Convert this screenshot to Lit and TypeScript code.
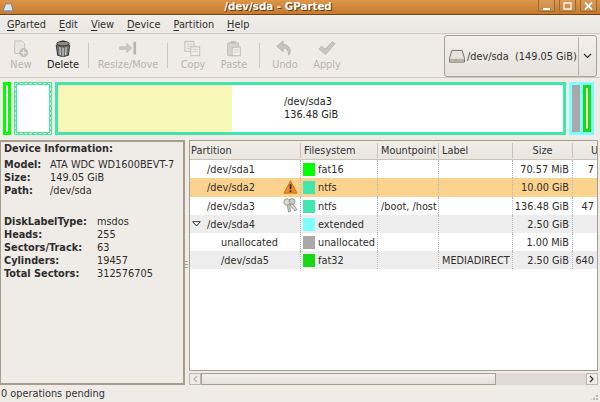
import { LitElement, html, css, svg } from "lit";
import { customElement } from "lit/decorators.js";

const icons: Record<string, any> = {
  new: svg`<path d="M4 1h8l3 3v11H4z" fill="#e8e6e2" stroke="#c4c0ba"/><circle cx="14" cy="14" r="5" fill="#c2bfba"/><path d="M14 11v6M11 14h6" stroke="#eeeae6" stroke-width="1.400"/>`,
  delete: svg`<ellipse cx="11" cy="4" rx="7" ry="2.600" fill="#8d8d88" stroke="#3a3a38"/><path d="M8 2.300q3-2 6 0" fill="none" stroke="#333" stroke-width="1.200"/><path d="M3.500 5.500l1.500 11.500q6 3 12 0l1.500-11.500q-7.500 3-15 0z" fill="#6f706c" stroke="#2f2f2d"/><path d="M7.500 8l.5 9M11 8.700v9.500M14.500 8l-.5 9" stroke="#c9c9c5" stroke-width="1.400"/>`,
  resize: svg`<path d="M1 7h8V3l7 6-7 6v-4H1z" fill="#c9c6c1"/><rect x="17" y="2" width="3" height="14" fill="#b8b5b0"/>`,
  copy: svg`<rect x="2" y="1.500" width="10" height="11" fill="#eeece8" stroke="#bdbab5"/><path d="M4 4.500h6M4 7h6M4 9.500h6" stroke="#cfccc7"/><rect x="8.500" y="7.500" width="10" height="10" fill="#f0eeea" stroke="#bdbab5"/><path d="M10.500 10.500h6M10.500 13h6" stroke="#cfccc7"/>`,
  paste: svg`<rect x="4" y="3" width="12" height="14.500" rx="1" fill="#d6d3ce" stroke="#bdbab5"/><rect x="7.500" y="1" width="5" height="3.500" fill="#c4c1bc"/><rect x="9" y="8" width="9" height="9.500" fill="#f0eeea" stroke="#bdbab5"/><path d="M10.500 11h6M10.500 13.500h6" stroke="#cfccc7"/>`,
  undo: svg`<path d="M9 1L2 7l7 6V9.500c4 0 6 2 6 7.500 3-3.500 3.500-11-6-12z" fill="#c6c3be" stroke="#b8b5b0"/>`,
  apply: svg`<path d="M2 10l3-3 4 3 8-8 3 2-10.500 12z" fill="#c9c6c1" stroke="#bcb9b4"/>`,
};

const tools: any[] = [
  { k: "new", t: "New", w: 42, on: false },
  { k: "delete", t: "Delete", w: 42, on: true },
  { sep: 4 },
  { k: "resize", t: "Resize/Move", w: 78, on: false },
  { sep: 0 },
  { k: "copy", t: "Copy", w: 50, on: false },
  { k: "paste", t: "Paste", w: 32, on: false },
  { sep: 9 },
  { k: "undo", t: "Undo", w: 50, on: false },
  { k: "apply", t: "Apply", w: 34, on: false },
];

const warn = html`<svg class="ic w" width="15" height="14" viewBox="0 0 17 16"><path d="M8.500 1L16 15H1z" fill="#f08a1e" stroke="#c76a10" stroke-linejoin="round"/><path d="M8.500 5v5.500" stroke="#2b2210" stroke-width="2"/><circle cx="8.500" cy="12.800" r="1.100" fill="#2b2210"/></svg>`;
const keys = html`<svg class="ic k" width="17" height="15" viewBox="0 0 17 15"><path d="M6 6l6 7 2-1.500-5-6.500z" fill="#d4d4d0" stroke="#8b8b86" stroke-width=".8"/><path d="M4 6l1.500 8 2-.5-.8-7.500z" fill="#c8c8c4" stroke="#8b8b86" stroke-width=".8"/><circle cx="4" cy="4" r="3.200" fill="#dcdcd8" stroke="#8b8b86" stroke-width=".8"/><circle cx="9" cy="3.500" r="3" fill="#c8c8c4" stroke="#8b8b86" stroke-width=".8"/></svg>`;
const expander = html`<svg class="ex" width="9" height="6" viewBox="0 0 9 6"><path d="M.7.700h7.600L4.500 5z" fill="#fff" stroke="#333" stroke-width="1"/></svg>`;

const rows = [
  { p: "/dev/sda1", ind: 0, icon: null, c: "#00ff00", fs: "fat16", m: "", l: "", s: "70.57 MiB", u: "7", cls: "" },
  { p: "/dev/sda2", ind: 0, icon: warn, c: "#42e5ac", fs: "ntfs", m: "", l: "", s: "10.00 GiB", u: "", cls: "sel" },
  { p: "/dev/sda3", ind: 0, icon: keys, c: "#42e5ac", fs: "ntfs", m: "/boot, /host", l: "", s: "136.48 GiB", u: "47", cls: "" },
  { p: "/dev/sda4", ind: 0, icon: null, c: "#7dffff", fs: "extended", m: "", l: "", s: "2.50 GiB", u: "", cls: "alt", exp: true },
  { p: "unallocated", ind: 1, icon: null, c: "#a9a9a9", fs: "unallocated", m: "", l: "", s: "1.00 MiB", u: "", cls: "" },
  { p: "/dev/sda5", ind: 1, icon: null, c: "#18d818", fs: "fat32", m: "", l: "MEDIADIRECT", s: "2.50 GiB", u: "640", cls: "alt" },
];

const info = [["Model:", "ATA WDC WD1600BEVT-7"], ["Size:", "149.05 GiB"], ["Path:", "/dev/sda"]];
const info2 = [["DiskLabelType:", "msdos"], ["Heads:", "255"], ["Sectors/Track:", "63"], ["Cylinders:", "19457"], ["Total Sectors:", "312576705"]];

@customElement("app-root")
export class AppRoot extends LitElement {
  static styles = css`
    :host { display: flex; flex-direction: column; width: 600px; height: 402px; overflow: hidden; background: #efebe7; font: 9.75px/13px "DejaVu Sans", sans-serif; color: #2e2e2c; }
    .title { height: 15px; box-sizing: border-box; flex: none; display: flex; align-items: center; background: linear-gradient(#dd964a, #c67a2c); border-bottom: 1px solid #6e4416; position: relative; padding-left: 2px; }
    .title .name { position: absolute; left: 0; right: 44px; text-align: center; top: -1px; color: #fff; font-weight: bold; font-size: 10.3px; line-height: 14px; text-shadow: 1px 1px 0 #5c3a12; }
    .wb { display: flex; gap: 4px; margin-left: auto; margin-right: 3px; z-index: 1; align-self: flex-start; }
    .wb span { width: 17px; height: 12px; box-sizing: border-box; border: 1px solid #9a6a36; border-top: 0; border-radius: 0 0 2px 2px; background: linear-gradient(#d99a58, #c98a48); display: flex; align-items: center; justify-content: center; }
    .menu { height: 19px; box-sizing: border-box; flex: none; display: flex; align-items: center; padding-left: 7px; border-bottom: 1px solid #cfc9bf; background: linear-gradient(#f0ede9, #ebe7e2); }
    .menu span { margin-right: 13px; }
    .menu u { text-decoration-thickness: 1px; text-underline-offset: 2px; }
    .tb { height: 44px; flex: none; box-sizing: border-box; display: flex; align-items: flex-start; padding: 6px 0 0 0; border-bottom: 1px solid #cfc9bf; }
    .tool { display: flex; flex-direction: column; align-items: center; flex: none; color: #b8b5ae; }
    .tool.on { color: #1e1e1c; }
    .tool svg { height: 18px; }
    .tool .lb { line-height: 14px; }
    .sep { width: 1px; height: 25px; margin-top: 3px; flex: none; background: #cdc8bf; }
    .tools { display: flex; }
    .combo { margin-left: auto; margin-right: 3px; margin-top: -5px; width: 153px; height: 42px; box-sizing: border-box; border: 1px solid #a8a294; border-radius: 3px; background: linear-gradient(#f2efeb, #e6e2dc); display: flex; align-items: center; padding-left: 3px; color: #333; }
    .combo .v { white-space: pre; margin-left: 1px; flex: 1; }
    .combo .ar { width: 17px; align-self: stretch; margin: 1px 0; border-left: 1px solid #b8b2a6; display: flex; align-items: center; justify-content: center; }
    .graph { height: 62px; flex: none; box-sizing: border-box; display: flex; gap: 3px; padding: 4px 0 0 3px; }
    .part { box-sizing: border-box; height: 53px; border: 3px solid; flex: none; background: #fff; display: flex; }
    .p1 { width: 8px; border-color: #00ff00; }
    .p2 { width: 38px; border-color: #42e5ac; outline: 1px dashed #f7f7b8; outline-offset: -2px; }
    .p3 { width: 511px; border-color: #42e5ac; }
    .p3 .used { width: 174px; background: #f7f7b8; }
    .p3 .txt { margin-left: 52px; margin-top: 10px; color: #222; }
    .ext { width: 25px; height: 53px; flex: none; box-sizing: border-box; background: #7dffff; padding: 3px; display: flex; gap: 3px; }
    .ext i { display: block; box-sizing: border-box; width: 8px; height: 47px; }
    .ext .un { background: #a9a9a9; }
    .ext .f32 { border: 3px solid #18d818; background: #f7f7b8; }
    .main { flex: 1; min-height: 0; display: flex; }
    .frame { width: 185px; flex: none; box-sizing: border-box; border: 2px solid #a89c8c; border-left-width: 1px; padding: 0 3px; }
    .frame .b { font-weight: bold; }
    .frame .h { font-weight: bold; margin-bottom: 3px; }
    .kv { display: grid; white-space: nowrap; }
    .k1 { grid-template-columns: 46px auto; margin-bottom: 18px; }
    .k2 { grid-template-columns: 93px auto; }
    .pane { width: 4px; flex: none; display: flex; align-items: center; }
    .pane::before { content: ""; display: block; width: 3px; height: 7px; margin-top: 4px; background: repeating-linear-gradient(#a9a397 0 1px, transparent 1px 3px); }
    .right { flex: 1; min-width: 0; display: flex; flex-direction: column; }
    .tree { flex: 1; min-height: 0; margin-right: 2px; box-sizing: border-box; border: 1px solid #a89c8c; background: #fff; overflow: hidden; }
    .row { display: grid; grid-template-columns: 111px 77px 61px 74px 60px 24px; height: 18px; box-sizing: border-box; align-items: center; }
    .head { height: 19px; background: linear-gradient(#f1eeea, #e9e5df); border-bottom: 1px solid #c9c3b8; color: #333; }
    .head > div { border-right: 1px solid #c9c3b8; padding-left: 3px; height: 15px; line-height: 15px; overflow: hidden; white-space: nowrap; }
    .head > div:first-child { padding-left: 1px; }
    .head > .sz { text-align: center; padding-left: 0; }
    .head > .un { border: 0; padding-left: 18px; }
    .row.alt { background: #ededed; }
    .row.sel { background: #fbd28e; height: 19px; }
    .cell { height: 100%; box-sizing: border-box; border-right: 1px dotted #b9b9b9; display: flex; align-items: center; white-space: nowrap; overflow: hidden; padding-left: 3px; }
    .cell.r { justify-content: flex-end; padding-right: 3px; }
    .c0 { position: relative; padding-left: 17px; border-right: 0; }
    .c0.ind { padding-left: 31px; }
    .c0 .ic { position: absolute; right: 3px; }
    .c0 .w { top: 2px; }
    .c0 .k { top: 1px; right: 1px; }
    .c0 .ex { position: absolute; left: 2px; top: 6px; }
    .fs { padding-left: 2px; border-left: 1px dotted #b9b9b9; margin-left: -1px; }
    .sw { width: 12px; height: 13px; flex: none; margin-right: 3px; }
    .cell.last { border-right: 0; justify-content: flex-end; padding: 0 3px 0 0; }
    .sb { height: 12px; flex: none; margin: 2px 2px 0 0; display: flex; background: #dfdad3; }
    .btn { width: 12px; flex: none; box-sizing: border-box; border: 1px solid #bdb7ac; background: #efebe7; display: flex; align-items: center; justify-content: center; }
    .thumb { width: 295px; flex: none; box-sizing: border-box; border: 1px solid #a89f90; background: linear-gradient(#f3f1ed, #e4e1d9); }
    .gap { flex: 1; }
    .status { height: 17px; flex: none; display: flex; align-items: center; padding-left: 1px; position: relative; color: #333; }
    .grip { position: absolute; right: 1px; bottom: 1px; width: 9px; height: 9px; background: radial-gradient(circle at 1px 1px, #bdb7ac 1px, transparent 1px) 0 0 / 3px 3px; clip-path: polygon(100% 0, 100% 100%, 0 100%); }
  `;

  render() {
    return html`
      <div class="title">
        <svg width="12" height="11" viewBox="0 0 13 12"><path d="M1 10l3-8h6l2 8z" fill="#dfe3ee" stroke="#6a7392" stroke-width=".8"/><rect x="2" y="9" width="9" height="2" fill="#8a93b6"/></svg>
        <div class="name">/dev/sda - GParted</div>
        <div class="wb">
          <span><svg width="9" height="8" viewBox="0 0 9 8"><rect x="1" y="6" width="7" height="2" fill="#fff"/></svg></span>
          <span><svg width="9" height="8" viewBox="0 0 9 8"><rect x="1" y="1" width="7" height="6" fill="none" stroke="#fff" stroke-width="1.300"/></svg></span>
          <span><svg width="9" height="8" viewBox="0 0 9 8"><path d="M1 .5l7 7M8 .5l-7 7" stroke="#fff" stroke-width="1.800"/></svg></span>
        </div>
      </div>
      <div class="menu">
        ${["GParted", "Edit", "View", "Device", "Partition", "Help"].map((m) => html`<span><u>${m[0]}</u>${m.slice(1)}</span>`)}
      </div>
      <div class="tb">
        <div class="tools">
          ${tools.map((t) =>
            t.k
              ? html`<div class="tool ${t.on ? "on" : ""}" style="width:${t.w}px">
                  <svg width="22" height="18" viewBox="0 0 22 20">${icons[t.k]}</svg>
                  <div class="lb">${t.t}</div>
                </div>`
              : html`<div class="sep" style="margin-left:${t.sep}px"></div>`
          )}
        </div>
        <div class="combo">
          <svg width="18" height="15" viewBox="0 0 18 16"><path d="M3.500 1.500h11L17 10v4H1v-4z" fill="#e6e3dc" stroke="#6f6c66"/><rect x="1.500" y="10.500" width="15" height="3" fill="#b5b2aa"/><rect x="6" y="11" width="3" height="1" fill="#d8901f"/></svg>
          <span class="v">/dev/sda  (149.05 GiB)</span>
          <span class="ar"><svg width="9" height="6" viewBox="0 0 9 6"><path d="M1 1l3.500 3.500L8 1" fill="none" stroke="#333" stroke-width="1.200"/></svg></span>
        </div>
      </div>
      <div class="graph">
        <div class="part p1"></div>
        <div class="part p2"></div>
        <div class="part p3">
          <div class="used"></div>
          <div class="txt">/dev/sda3<br />136.48 GiB</div>
        </div>
        <div class="ext"><i class="un"></i><i class="f32"></i></div>
      </div>
      <div class="main">
        <div class="frame">
          <div class="h">Device Information:</div>
          <div class="kv k1">${info.map(([a, b]) => html`<div class="b">${a}</div><div>${b}</div>`)}</div>
          <div class="kv k2">${info2.map(([a, b]) => html`<div class="b">${a}</div><div>${b}</div>`)}</div>
        </div>
        <div class="pane"></div>
        <div class="right">
          <div class="tree">
            <div class="row head">
              <div>Partition</div><div>Filesystem</div><div>Mountpoint</div><div>Label</div><div class="sz">Size</div><div class="un">U</div>
            </div>
            ${rows.map(
              (r) => html`<div class="row ${r.cls}">
                <div class="cell c0 ${r.ind ? "ind" : ""}">
                  ${r.exp ? expander : ""}${r.p}${r.icon ?? ""}
                </div>
                <div class="cell fs"><span class="sw" style="background:${r.c}"></span>${r.fs}</div>
                <div class="cell">${r.m}</div>
                <div class="cell">${r.l}</div>
                <div class="cell r">${r.s}</div>
                <div class="cell last">${r.u}</div>
              </div>`
            )}
          </div>
          <div class="sb">
            <div class="btn"><svg width="6" height="8" viewBox="0 0 6 8"><path d="M5 1L2 4l3 3" fill="none" stroke="#b8b3a8" stroke-width="1.200"/></svg></div>
            <div class="thumb"></div>
            <div class="gap"></div>
            <div class="btn"><svg width="6" height="8" viewBox="0 0 6 8"><path d="M1 1l3 3-3 3" fill="none" stroke="#333" stroke-width="1.200"/></svg></div>
          </div>
        </div>
      </div>
      <div class="status">0 operations pending<div class="grip"></div></div>
    `;
  }
}
